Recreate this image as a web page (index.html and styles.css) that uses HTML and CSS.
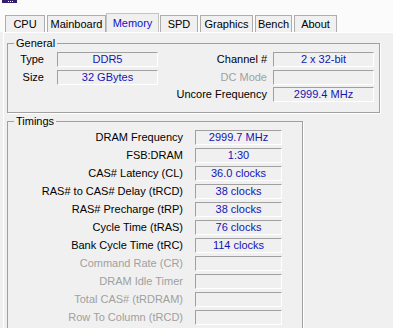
FILE: index.html
```html
<!DOCTYPE html>
<html>
<head>
  <title>CPU-Z Memory</title>
  <meta name="viewport" content="width=device-width, initial-scale=1.0">
  <link rel="stylesheet" href="styles.css">
</head>
<body>
  <div class="head">
    <div class="badge">
      <svg width="15" height="3" viewBox="0 0 15 3">
        <rect width="15" height="3" fill="#34206a"/>
        <rect x="6" y="1" width="1" height="1" fill="#fff"/>
        <rect x="8" y="1" width="1" height="1" fill="#fff"/>
        <rect x="10" y="1" width="1" height="1" fill="#fff"/>
      </svg>
    </div>
    <nav class="tabs">
      <span class="tab cpu">CPU</span>
      <span class="tab mainboard">Mainboard</span>
      <span class="tab memory active">Memory</span>
      <span class="tab spd">SPD</span>
      <span class="tab graphics">Graphics</span>
      <span class="tab bench">Bench</span>
      <span class="tab about">About</span>
    </nav>
  </div>

  <div class="panel">
    <fieldset class="group general">
      <legend>General</legend>
      <div class="general-grid">
        <span class="lbl">Type</span>
        <span class="val">DDR5</span>
        <span class="lbl">Channel #</span>
        <span class="val">2 x 32-bit</span>

        <span class="lbl">Size</span>
        <span class="val">32 GBytes</span>
        <span class="lbl off">DC Mode</span>
        <span class="val"></span>

        <span class="lbl uncore">Uncore Frequency</span>
        <span class="val">2999.4 MHz</span>
      </div>
    </fieldset>

    <fieldset class="group timings">
      <legend>Timings</legend>
      <div class="timings-grid">
        <span class="lbl">DRAM Frequency</span><span class="val">2999.7 MHz</span>
        <span class="lbl">FSB:DRAM</span><span class="val">1:30</span>
        <span class="lbl">CAS# Latency (CL)</span><span class="val">36.0 clocks</span>
        <span class="lbl">RAS# to CAS# Delay (tRCD)</span><span class="val">38 clocks</span>
        <span class="lbl">RAS# Precharge (tRP)</span><span class="val">38 clocks</span>
        <span class="lbl">Cycle Time (tRAS)</span><span class="val">76 clocks</span>
        <span class="lbl">Bank Cycle Time (tRC)</span><span class="val">114 clocks</span>
        <span class="lbl off">Command Rate (CR)</span><span class="val"></span>
        <span class="lbl off">DRAM Idle Timer</span><span class="val"></span>
        <span class="lbl off">Total CAS# (tRDRAM)</span><span class="val"></span>
        <span class="lbl off">Row To Column (tRCD)</span><span class="val"></span>
      </div>
    </fieldset>
  </div>
</body>
</html>
```

FILE: styles.css
```css
body {
  margin: 0;
  padding: 0;
  background-color: #f0f0f0;
  font-family: "Liberation Sans", Arial, sans-serif;
  font-size: 11px;
  color: #000;
  overflow: hidden;
}

.head {
  height: 32px;
  background-color: #fbfbfb;
  display: flex;
  flex-direction: column;
}

.badge {
  height: 3px;
  margin-left: 2px;
}

.badge svg {
  display: block;
}

.tabs {
  margin-top: auto;
  height: 19px;
  padding-left: 3px;
  display: flex;
  align-items: flex-end;
}

.tab {
  box-sizing: border-box;
  height: 17px;
  margin-left: 2px;
  background-color: #f0f0f0;
  border: 1px solid #adadad;
  border-bottom: none;
  text-align: center;
  line-height: 17px;
  color: #000;
}

.tab.active {
  height: 19px;
  margin-left: 0;
  margin-right: -1px;
  color: #1010c8;
  line-height: 19px;
  border-color: #c4c4c4;
}

.cpu { width: 40px; }
.mainboard { width: 59px; }
.memory { width: 53px; }
.spd { width: 38px; }
.graphics { width: 53px; }
.bench { width: 37px; }
.about { width: 43px; }

.panel {
  margin-left: 3px;
  border-top: 1px solid #fff;
  border-left: 1px solid #fff;
  padding-left: 3px;
}

.group {
  box-sizing: border-box;
  margin: 0;
  padding: 0;
  border: 1px solid #a0a0a0;
  box-shadow: 1px 1px 0 #fff;
  min-inline-size: 0;
}

.group legend {
  margin-left: 6px;
  padding: 0 2px;
  line-height: 13px;
  height: 13px;
}

.general {
  width: 373px;
  margin-top: 4px;
  padding: 2px 0 10px 0;
}

.timings {
  width: 296px;
  margin-top: 2px;
  padding: 2px 0 10px 0;
}

.general-grid {
  display: grid;
  grid-template-columns: 49px 101px 115px 101px;
  grid-auto-rows: 15px;
  row-gap: 2.5px;
}

.timings-grid {
  display: grid;
  grid-template-columns: 187px 87px;
  grid-auto-rows: 15px;
  row-gap: 3px;
}

.lbl {
  text-align: right;
  line-height: 15px;
  white-space: nowrap;
}

.general-grid .lbl {
  padding-right: 13px;
}

.general-grid .lbl:nth-child(4n+3) {
  padding-right: 6px;
}

.general-grid .uncore {
  grid-column: 3;
  padding-right: 6px;
}

.timings-grid .lbl {
  padding-right: 12px;
}

.lbl.off {
  color: #a0a0a0;
}

.val {
  box-sizing: border-box;
  height: 15px;
  border-top: 1px solid #a0a0a0;
  border-left: 1px solid #a0a0a0;
  border-bottom: 1px solid #fff;
  border-right: 1px solid #fff;
  background-color: #f0f0f0;
  color: #1414b4;
  text-align: center;
  line-height: 13px;
  white-space: nowrap;
}
```
